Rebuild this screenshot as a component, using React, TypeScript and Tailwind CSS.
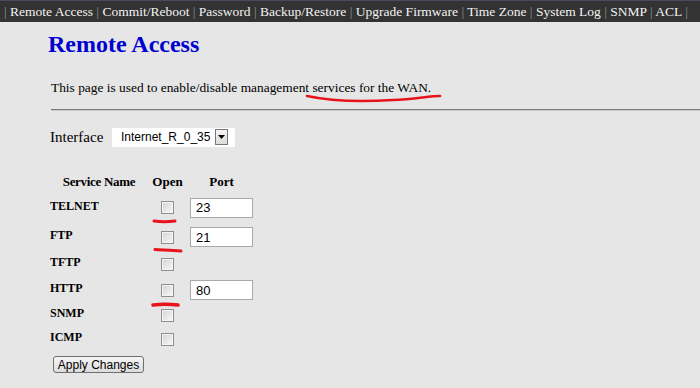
import React from "react";

const navItems = [
  "Remote Access",
  "Commit/Reboot",
  "Password",
  "Backup/Restore",
  "Upgrade Firmware",
  "Time Zone",
  "System Log",
  "SNMP",
  "ACL",
];

type Row = { name: string; port?: string; h: string };
const rows: Row[] = [
  { name: "TELNET", port: "23", h: "h-[29px]" },
  { name: "FTP", port: "21", h: "h-[30px]" },
  { name: "TFTP", h: "h-[24px]" },
  { name: "HTTP", port: "80", h: "h-[28px]" },
  { name: "SNMP", h: "h-[22px]" },
  { name: "ICMP", h: "h-[26px]" },
];

function Checkbox() {
  return (
    <div className="w-[13px] h-[13px] border border-[#8e8f8f] bg-[#f4f4f4] p-[1px]">
      <div className="w-full h-full bg-gradient-to-br from-[#d6d6d6] to-[#f6f6f6]" />
    </div>
  );
}

export default function App() {
  const serif = { fontFamily: '"Liberation Serif", "Times New Roman", serif' };
  const sans = { fontFamily: '"Liberation Sans", Arial, sans-serif' };
  return (
    <div className="relative w-full min-h-screen bg-[#e6e6e6] text-black" style={serif}>
      {/* Nav bar */}
      <div className="h-[22px] bg-[#333333] border-t border-[#4a4a5c] flex items-center pl-[4px] text-[13.5px] text-[#f2f2f2] whitespace-pre leading-none">
        <span className="text-[#8c8c8c]">|</span>
        {navItems.map((n) => (
          <React.Fragment key={n}>
            <span> {n} </span>
            <span className="text-[#8c8c8c]">|</span>
          </React.Fragment>
        ))}
      </div>

      {/* Title */}
      <div className="mt-[8px] pl-[48px] h-[28px] leading-[28px] text-[24px] font-bold text-[#0000d0]">
        Remote Access
      </div>

      {/* Description */}
      <div className="mt-[22px] pl-[51px] leading-[16px] text-[13.4px]">
        This page is used to enable/disable management services for the WAN.
      </div>

      {/* Divider */}
      <div className="mt-[13px] ml-[51px] h-[1px] bg-[#7c7c7c]" />
      <div className="ml-[51px] h-[1px] bg-[#c8c8c8]" />

      {/* Interface */}
      <div className="mt-[16px] ml-[50px] h-[20px] flex items-center">
        <span className="w-[62px] text-[15px] leading-[20px]">Interface</span>
        <div className="w-[123px] h-[19px] bg-white flex items-center pl-[9px]" style={sans}>
          <span className="w-[94px] text-[12px] leading-none">Internet_R_0_35</span>
          <div className="w-[13px] h-[16px] border border-[#777] bg-gradient-to-b from-[#f4f4f4] to-[#dcdcdc] flex items-center justify-center">
            <svg width="7" height="4" viewBox="0 0 7 4">
              <path d="M0 0 H7 L3.5 4 Z" fill="#000" />
            </svg>
          </div>
        </div>
      </div>

      {/* Table */}
      <div className="mt-[23px] ml-[50px] w-[206px]">
        <div className="grid grid-cols-[98px_39px_69px] h-[23px] items-center text-[13px] font-bold leading-none">
          <span className="text-center tracking-[-0.3px]">Service Name</span>
          <span className="text-center">Open</span>
          <span className="text-center">Port</span>
        </div>
        {rows.map((r) => (
          <div key={r.name} className={`grid grid-cols-[98px_39px_69px] items-center ${r.h}`}>
            <span className="text-[12px] font-bold leading-none -mt-[4px]">{r.name}</span>
            <div className="flex justify-center">
              <Checkbox />
            </div>
            <div className="pl-[3px]">
              {r.port && (
                <div
                  className="w-[63px] h-[20px] border border-[#a9a9a9] bg-white pl-[5px] flex items-center text-[13px] leading-none"
                  style={sans}
                >
                  {r.port}
                </div>
              )}
            </div>
          </div>
        ))}
        <div className="mt-[4px] ml-[3px]">
          <div
            className="w-[91px] h-[17px] border border-[#6f6f6f] rounded-[3px] bg-gradient-to-b from-[#f6f6f6] to-[#dcdcdc] flex items-center justify-center text-[12px] leading-none"
            style={sans}
          >
            Apply Changes
          </div>
        </div>
      </div>

      {/* Red annotation marks */}
      <svg
        className="absolute left-0 top-0 pointer-events-none"
        width="700"
        height="388"
        viewBox="0 0 700 388"
        fill="none"
      >
        <path
          d="M307 96 C330 101 360 102 393 100 C415 99 430 96 440 96"
          stroke="#e8141b"
          strokeWidth="2.5"
          strokeLinecap="round"
        />
        <path d="M154 221 C161 222 168 222 175 221" stroke="#e8141b" strokeWidth="3" strokeLinecap="round" />
        <path d="M155 249.5 C163 250 172 250 181 251" stroke="#e8141b" strokeWidth="3" strokeLinecap="round" />
        <path d="M153 305 C160 304 170 304 178 305" stroke="#e8141b" strokeWidth="3.5" strokeLinecap="round" />
      </svg>
    </div>
  );
}
